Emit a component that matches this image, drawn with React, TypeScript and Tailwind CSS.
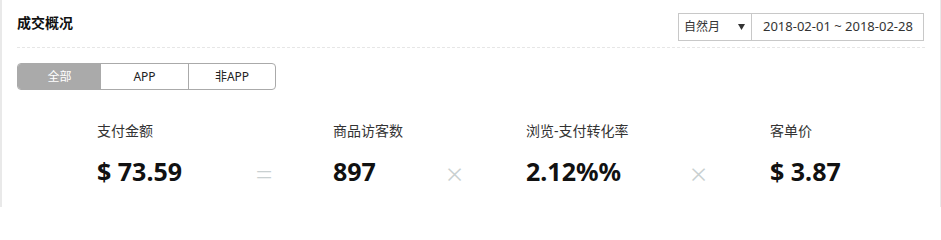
import React from "react";

const font = { fontFamily: '"Noto Sans", "Noto Sans CJK SC", sans-serif' };

function Metric({ label, value, w }: { label: string; value: string; w: string }) {
  return (
    <div className={`flex flex-col ${w}`}>
      <div className="text-[14px] leading-[20px] text-[#333] whitespace-nowrap">{label}</div>
      <div className="mt-[14px] text-[25px] leading-[32px] font-bold text-[#111] whitespace-nowrap">{value}</div>
    </div>
  );
}

function Op({ ch, w }: { ch: string; w: string }) {
  return (
    <div className={`flex flex-col ${w}`}>
      <div className="h-[20px]" />
      <div className="mt-[14px] h-[32px] flex items-center justify-center text-[30px] font-light text-[#c9d0d1] leading-none pt-[6px]">
        {ch}
      </div>
    </div>
  );
}

export default function App() {
  return (
    <div
      className="w-[941px] h-[207px] bg-white border-l-2 border-r border-[#e9e9e9] overflow-hidden"
      style={font}
    >
      <div className="mx-[15px]">
        <div className="flex justify-between items-start pt-[13px] h-[48px] border-b border-dashed border-[#e6e6e6]">
          <div className="text-[14px] leading-[19px] font-bold text-[#111]">成交概况</div>
          <div className="flex h-[28px] border border-[#c8c8c8] mr-[1px] text-[12px] text-[#333]">
            <div className="w-[73px] flex items-center justify-between pl-[5px] pr-[6px] border-r border-[#c8c8c8]">
              <span>自然月</span>
              <svg width="7" height="6" viewBox="0 0 7 6">
                <path d="M0 0 H7 L3.5 6 Z" fill="#333" />
              </svg>
            </div>
            <div className="w-[171px] flex items-center pl-[11px] text-[13px]">2018-02-01 ~ 2018-02-28</div>
          </div>
        </div>

        <div className="mt-[15px] flex h-[27px] w-[259px] border border-[#aaaaaa] rounded-[4px] overflow-hidden text-[12px]">
          <div className="w-[83px] bg-[#aaaaaa] text-white flex items-center justify-center">全部</div>
          <div className="w-[88px] border-r border-[#aaaaaa] text-[#222] flex items-center justify-center">APP</div>
          <div className="flex-1 text-[#222] flex items-center justify-center">非APP</div>
        </div>

        <div className="mt-[31px] pl-[80px] flex">
          <Metric label="支付金额" value="$ 73.59" w="w-[161px]" />
          <Op ch="=" w="w-[12px]" />
          <Metric label="商品访客数" value="897" w="w-[114px] ml-[63px]" />
          <Op ch="×" w="w-[15px]" />
          <Metric label="浏览-支付转化率" value="2.12%%" w="w-[165px] ml-[64px]" />
          <Op ch="×" w="w-[15px]" />
          <Metric label="客单价" value="$ 3.87" w="w-[100px] ml-[64px]" />
        </div>
      </div>
    </div>
  );
}
